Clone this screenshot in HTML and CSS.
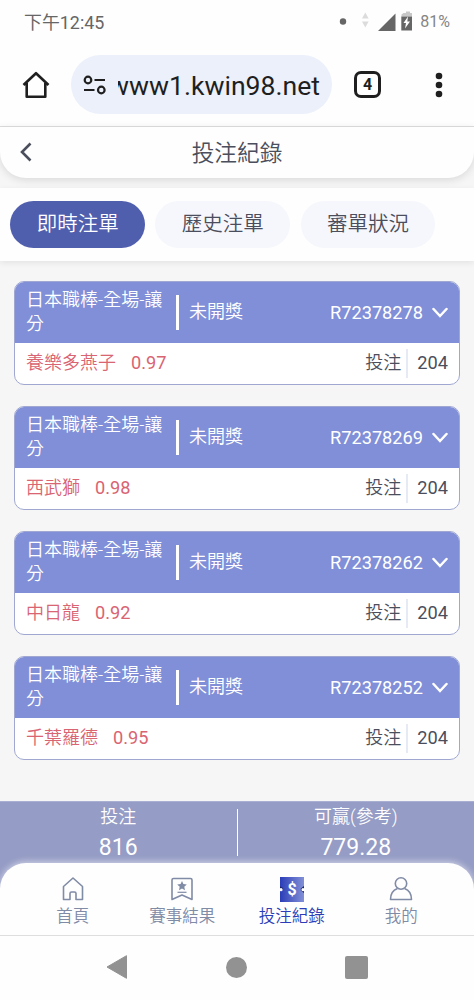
FILE: index.html
```html
<!DOCTYPE html>
<html lang="zh-Hant">
<head>
    <meta charset="UTF-8">
    <meta name="viewport" content="width=device-width, initial-scale=1">
    <title>投注紀錄</title>

    <link rel="stylesheet" href="styles.css">

</head>
<body>

<div class="status">
    <span class="time">下午12:45</span>
    <svg class="status-icons" width="76" height="24" viewBox="0 0 76 24">
        <circle cx="5" cy="11.500" r="3.200" fill="#666"/>
        <path d="M24 8.500L27.300 2.500L30.600 8.500ZM24 11.500L27.300 17.500L30.600 11.500Z" fill="#dcdcdc"/>
        <path d="M40 21L57.500 3.500V21Z" fill="#666"/>
        <path d="M65.500 3H68V1.500H72V3H74V6.500H63.500V4.500Z" fill="#c8c8c8"/>
        <path d="M63.300 6.500H74V20.500H63.300Z" fill="#666"/>
        <path d="M70 6.500L65.500 13H68L67 18.500L72 11.500H69.300Z" fill="#fff"/>
    </svg>
    <span class="battery">81%</span>
</div>

<div class="browser">
    <svg class="home" width="28" height="28" viewBox="0 0 28 28" fill="none" stroke="#1f1f1f" stroke-width="2.600">
        <path d="M1.500 14L14 2.200L26.500 14M4.700 12V25.700H23.300V12" stroke-linejoin="round"/>
    </svg>
    <div class="address">
        <svg width="24" height="20" viewBox="0 0 24 20" fill="none" stroke="#1f1f1f" stroke-width="2.200">
            <circle cx="5" cy="5" r="3.300"/>
            <path d="M11.500 5H22M1 15H11.500"/>
            <circle cx="18.300" cy="15" r="3.300"/>
        </svg>
        <div class="url"><span>www1.kwin98.net</span></div>
    </div>
    <div class="count">4</div>
    <svg class="dots" width="8" height="26" viewBox="0 0 8 26" fill="#1f1f1f">
        <circle cx="4" cy="4" r="3.300"/>
        <circle cx="4" cy="13" r="3.300"/>
        <circle cx="4" cy="22" r="3.300"/>
    </svg>
</div>

<div class="title">
    <svg width="12" height="20" viewBox="0 0 12 20" fill="none" stroke="#4b4e5c" stroke-width="2.600">
        <path d="M10.500 1.500L2 10L10.500 18.500"/>
    </svg>
    <h1>投注紀錄</h1>
</div>

<div class="tabs">
    <div class="tab active">即時注單</div>
    <div class="tab">歷史注單</div>
    <div class="tab">審單狀況</div>
</div>

<div class="list">
    <div class="card">
        <div class="card-head">
            <div class="game">日本職棒-全場-讓分</div>
            <div class="state">未開獎</div>
            <div class="number">R72378278</div>
            <svg class="arrow" width="16" height="12" viewBox="0 0 16 12"><path d="M1.500 2L8 9L14.500 2"/></svg>
        </div>
        <div class="card-body">
            <span class="team">養樂多燕子</span>
            <span class="odds">0.97</span>
            <span class="label">投注</span>
            <span class="amount">204</span>
        </div>
    </div>
    <div class="card">
        <div class="card-head">
            <div class="game">日本職棒-全場-讓分</div>
            <div class="state">未開獎</div>
            <div class="number">R72378269</div>
            <svg class="arrow" width="16" height="12" viewBox="0 0 16 12"><path d="M1.500 2L8 9L14.500 2"/></svg>
        </div>
        <div class="card-body">
            <span class="team">西武獅</span>
            <span class="odds">0.98</span>
            <span class="label">投注</span>
            <span class="amount">204</span>
        </div>
    </div>
    <div class="card">
        <div class="card-head">
            <div class="game">日本職棒-全場-讓分</div>
            <div class="state">未開獎</div>
            <div class="number">R72378262</div>
            <svg class="arrow" width="16" height="12" viewBox="0 0 16 12"><path d="M1.500 2L8 9L14.500 2"/></svg>
        </div>
        <div class="card-body">
            <span class="team">中日龍</span>
            <span class="odds">0.92</span>
            <span class="label">投注</span>
            <span class="amount">204</span>
        </div>
    </div>
    <div class="card">
        <div class="card-head">
            <div class="game">日本職棒-全場-讓分</div>
            <div class="state">未開獎</div>
            <div class="number">R72378252</div>
            <svg class="arrow" width="16" height="12" viewBox="0 0 16 12"><path d="M1.500 2L8 9L14.500 2"/></svg>
        </div>
        <div class="card-body">
            <span class="team">千葉羅德</span>
            <span class="odds">0.95</span>
            <span class="label">投注</span>
            <span class="amount">204</span>
        </div>
    </div>
</div>

<div class="footer">
    <div class="totals">
        <div class="total">
            <div class="total-label">投注</div>
            <div class="total-value">816</div>
        </div>
        <div class="line"></div>
        <div class="total">
            <div class="total-label">可贏(參考)</div>
            <div class="total-value">779.28</div>
        </div>
    </div>
    <div class="nav">
        <div class="nav-item">
            <svg width="26" height="26" viewBox="0 0 26 26" fill="none" stroke="#808ba6" stroke-width="1.600" stroke-linejoin="round">
                <path d="M3.500 10.500L13 2L22.500 10.500V23.500H16V17.500Q16 16 14.500 16H11.500Q10 16 10 17.500V23.500H3.500Z"/>
            </svg>
            <span>首頁</span>
        </div>
        <div class="nav-item">
            <svg width="26" height="26" viewBox="0 0 26 26" fill="none" stroke="#808ba6" stroke-width="1.600" stroke-linejoin="round">
                <path d="M4.500 2.500H21.500Q23 2.500 23 4V23.500L13 19L3 23.500V4Q3 2.500 4.500 2.500Z"/>
                <path d="M8.500 16.300H17.500" stroke-width="1.200"/>
                <path d="M13 5L14.400 8.100L17.800 8.500L15.300 10.800L16 14.200L13 12.500L10 14.200L10.700 10.800L8.200 8.500L11.600 8.100Z" fill="#808ba6" stroke="none"/>
            </svg>
            <span>賽事結果</span>
        </div>
        <div class="nav-item current">
            <svg width="26" height="26" viewBox="0 0 26 26">
                <defs>
                    <linearGradient id="ticket">
                        <stop offset="0" stop-color="#2b3db8"/>
                        <stop offset="1" stop-color="#8290d6"/>
                    </linearGradient>
                </defs>
                <path d="M1 1H25V26H1Z" fill="url(#ticket)"/>
                <path d="M1 10.500L4 12V13.500H1ZM25 10L21.800 12.500V14.500L25 17Z" fill="#1b2466"/>
                <circle cx="2" cy="13.700" r="1.600" fill="#fff"/>
                <circle cx="24" cy="13.700" r="1.600" fill="#fff"/>
                <text x="13" y="18.700" text-anchor="middle" fill="#fff" class="dollar">$</text>
            </svg>
            <span>投注紀錄</span>
        </div>
        <div class="nav-item">
            <svg width="26" height="26" viewBox="0 0 26 26" fill="none" stroke="#808ba6" stroke-width="1.600" stroke-linejoin="round">
                <circle cx="13" cy="7.500" r="5.700"/>
                <path d="M9.500 12.500Q2.500 15 2.500 23.500H23.500Q23.500 15 16.500 12.500"/>
            </svg>
            <span>我的</span>
        </div>
    </div>
</div>

<div class="system">
    <svg width="22" height="26" viewBox="0 0 22 26"><path d="M1 13L20.500 1.700V24.300Z" fill="#929292" stroke="#929292" stroke-linejoin="round"/></svg>
    <div class="circle"></div>
    <div class="square"></div>
</div>

</body>
</html>
```
FILE: styles.css
```css
* {
    box-sizing: border-box;
}

body {
    margin: 0;
    height: 1000px;
    display: flex;
    flex-direction: column;
    overflow: hidden;
    background-color: #f6f6f6;
    color: #4b4e5c;
    font-family: Roboto, "Noto Sans CJK TC", sans-serif;
    font-weight: 350;
    font-size: 18px;
}

svg {
    display: block;
    flex: none;
}

.status {
    height: 45px;
    display: flex;
    align-items: center;
    padding: 0 24px 2px 24px;
    background-color: #fefefe;
    color: #666;
    font-size: 17.9px;
    font-weight: 400;
}

.time {
    margin-top: -2px;
}

.status-icons {
    margin: 0 6px 0 auto;
}

.battery {
    font-size: 16px;
    color: #858585;
}

.browser {
    height: 82px;
    display: flex;
    align-items: center;
    padding: 0 31px 2px 22px;
    background-color: #fefefe;
    border-bottom: 1px solid #dedede;
}

.address {
    width: 261px;
    height: 59px;
    display: flex;
    align-items: center;
    margin: 0 22px 0 21px;
    padding: 0 12px;
    border-radius: 30px;
    background-color: #ebf0fa;
}

.url {
    display: flex;
    justify-content: flex-end;
    width: 202px;
    margin: 2px 0 0 11px;
    overflow: hidden;
    color: #1f1f1f;
    font-size: 26.6px;
    font-weight: 400;
    line-height: 34px;
}

.count {
    width: 27px;
    height: 27px;
    border: 3px solid #1f1f1f;
    border-radius: 7px;
    color: #1f1f1f;
    font-size: 16px;
    font-weight: 700;
    line-height: 22px;
    text-align: center;
}

.dots {
    margin-left: auto;
}

.title {
    height: 51px;
    display: flex;
    align-items: center;
    padding: 0 20px 1px;
    border-radius: 0 0 26px 26px;
    background-color: #fefefe;
    box-shadow: 0 2px 8px rgba(0, 0, 0, .12);
}

.title h1 {
    flex: 1;
    margin: 0 12px 1px 0;
    font-size: 22.7px;
    font-weight: 350;
    text-align: center;
}

.tabs {
    height: 73px;
    display: flex;
    gap: 10.5px;
    margin-top: 10px;
    padding: 13px 10.3px;
    background-color: #fefefe;
    box-shadow: 0 2px 6px rgba(0, 0, 0, .08);
    position: relative;
}

.tab {
    width: 134.7px;
    height: 47px;
    border-radius: 24px;
    background-color: #f6f7fc;
    font-size: 20.5px;
    line-height: 47px;
    text-align: center;
}

.tab.active {
    background-color: #505eae;
    color: #fff;
}

.list {
    flex: 1;
    padding: 20px 14px 0;
}

.card {
    height: 104px;
    margin-bottom: 21px;
    border: 1px solid #a0a8d2;
    border-radius: 10px;
    background-color: #fff;
    overflow: hidden;
}

.card-head {
    height: 61px;
    display: flex;
    align-items: center;
    padding: 0 11px;
    background-color: #808fd7;
    color: #fff;
}

.game {
    width: 140px;
    margin-top: -1px;
    line-height: 24.5px;
}

.state {
    height: 35px;
    margin-left: 10px;
    padding-left: 10px;
    border-left: 3px solid #fff;
    line-height: 34px;
}

.number {
    margin: 0 9px 0 auto;
    font-size: 18.2px;
    font-weight: 400;
}

.arrow {
    fill: none;
    stroke: #fff;
    stroke-width: 2.5px;
    stroke-linecap: round;
}

.card-body {
    height: 41px;
    display: flex;
    align-items: center;
    padding: 0 11px;
    line-height: 28px;
}

.team,
.odds {
    color: #d96472;
}

.team,
.label {
    margin-top: -1px;
}

.odds {
    margin: -2px 0 0 15px;
    font-size: 18.2px;
    font-weight: 400;
}

.label {
    margin-left: auto;
}

.amount {
    height: 29px;
    margin-left: 5px;
    padding-left: 9px;
    border-left: 2px solid #e6eaf5;
    font-size: 18.2px;
    font-weight: 400;
}

.footer {
    height: 134px;
    background-color: #959cc5;
    border-top: 1px solid #a9afd0;
}

.totals {
    height: 61px;
    display: flex;
    color: #fff;
    text-align: center;
}

.total {
    flex: 1;
}

.total-label {
    height: 29px;
    line-height: 29px;
}

.total-value {
    font-size: 23px;
    font-weight: 400;
    line-height: 34px;
}

.line {
    width: 1px;
    height: 47px;
    margin-top: 7px;
    background-color: #fff;
}

.nav {
    height: 72px;
    display: flex;
    padding: 13px 18px 0;
    border-radius: 26px 26px 0 0;
    background-color: #fefefe;
    box-shadow: 0 -1px 7px rgba(255, 255, 255, .6);
}

.nav-item {
    flex: 1;
    display: flex;
    flex-direction: column;
    align-items: center;
    color: #808ba6;
    font-size: 16.5px;
    line-height: 29px;
}

.nav-item.current {
    color: #2b3db8;
}

.dollar {
    font-size: 16px;
    font-weight: 700;
}

.system {
    height: 65px;
    display: flex;
    align-items: center;
    gap: 98px;
    padding: 0 0 2px 106px;
    border-top: 1px solid #dedede;
    background-color: #fefefe;
}

.circle {
    width: 21px;
    height: 21px;
    border-radius: 50%;
    background-color: #929292;
}

.square {
    width: 23px;
    height: 23px;
    border-radius: 2px;
    background-color: #929292;
}
```
